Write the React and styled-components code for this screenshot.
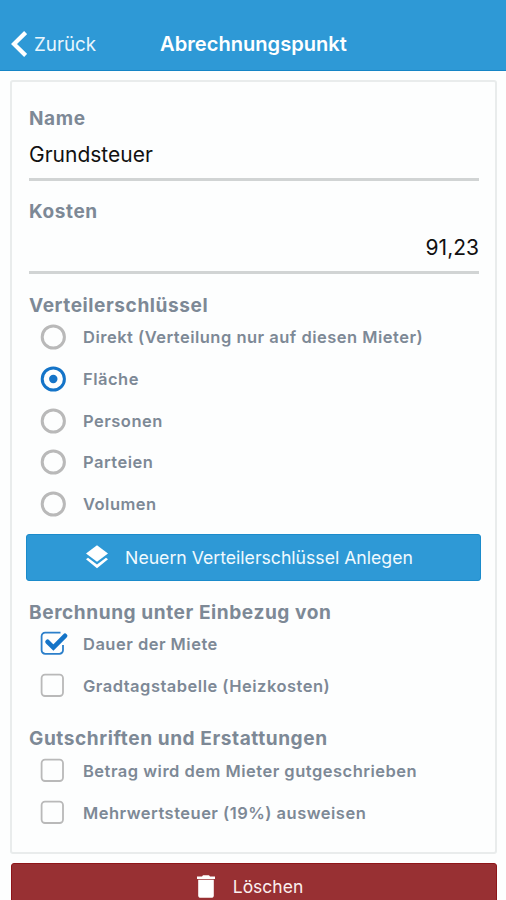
import React, { useState } from "react";
import styled, { createGlobalStyle } from "styled-components";

const DISTRIBUTION_KEYS = [
  "Direkt (Verteilung nur auf diesen Mieter)",
  "Fläche",
  "Personen",
  "Parteien",
  "Volumen",
];

const App = () => {
  const [name, setName] = useState("Grundsteuer");
  const [costs, setCosts] = useState("91,23");
  const [selectedKey, setSelectedKey] = useState("Fläche");
  const [options, setOptions] = useState({
    duration: true,
    degreeDays: false,
    credit: false,
    vat: false,
  });

  const toggleOption = (key) => {
    setOptions({ ...options, [key]: !options[key] });
  };

  return (
    <Screen>
      <GlobalStyle />
      <Header>
        <BackButton type="button">
          <BackIcon />
          <span>Zurück</span>
        </BackButton>
        <Title>Abrechnungspunkt</Title>
      </Header>

      <Card>
        <Field>
          <FieldLabel htmlFor="name">Name</FieldLabel>
          <Input id="name" value={name} onChange={(e) => setName(e.target.value)} />
        </Field>
        <Field>
          <FieldLabel htmlFor="costs">Kosten</FieldLabel>
          <Input
            id="costs"
            $align="right"
            value={costs}
            onChange={(e) => setCosts(e.target.value)}
          />
        </Field>

        <SectionTitle>Verteilerschlüssel</SectionTitle>
        {DISTRIBUTION_KEYS.map((label) => (
          <OptionRow
            key={label}
            type="button"
            role="radio"
            aria-checked={selectedKey === label}
            onClick={() => setSelectedKey(label)}
          >
            <RadioIcon checked={selectedKey === label} />
            {label}
          </OptionRow>
        ))}

        <PrimaryButton type="button">
          <LayersIcon />
          Neuern Verteilerschlüssel Anlegen
        </PrimaryButton>

        <SectionTitle>Berchnung unter Einbezug von</SectionTitle>
        <CheckOption
          label="Dauer der Miete"
          checked={options.duration}
          onToggle={() => toggleOption("duration")}
        />
        <CheckOption
          label="Gradtagstabelle (Heizkosten)"
          checked={options.degreeDays}
          onToggle={() => toggleOption("degreeDays")}
        />

        <SectionTitle $top="19.4px">Gutschriften und Erstattungen</SectionTitle>
        <CheckOption
          label="Betrag wird dem Mieter gutgeschrieben"
          checked={options.credit}
          onToggle={() => toggleOption("credit")}
        />
        <CheckOption
          label="Mehrwertsteuer (19%) ausweisen"
          checked={options.vat}
          onToggle={() => toggleOption("vat")}
        />
      </Card>

      <DeleteButton type="button">
        <TrashIcon />
        Löschen
      </DeleteButton>
    </Screen>
  );
};

const CheckOption = ({ label, checked, onToggle }) => (
  <OptionRow type="button" role="checkbox" aria-checked={checked} onClick={onToggle}>
    <CheckIcon checked={checked} />
    {label}
  </OptionRow>
);

const BackIcon = () => (
  <svg width="17" height="28" viewBox="0 0 17 28" fill="none">
    <path d="M15.6 2.6L4 14L15.6 25.4" stroke="#fff" strokeWidth="4.2" />
  </svg>
);

const RadioIcon = ({ checked }) => (
  <svg width="28" height="26" viewBox="0 0 28 26" fill="none">
    <circle cx="13.3" cy="13" r="11.1" stroke={checked ? "#1474c8" : "#b9b9b9"} strokeWidth="3" />
    {checked && <circle cx="13.3" cy="13" r="4.2" fill="#1474c8" />}
  </svg>
);

const CheckIcon = ({ checked }) => (
  <svg width="28" height="26" viewBox="0 0 28 26" fill="none">
    {checked ? (
      <>
        <path
          d="M20.5 1.6H5.2A3.6 3.6 0 0 0 1.6 5.2V19.2A3.6 3.6 0 0 0 5.2 22.8H19.4A3.6 3.6 0 0 0 23 19.2V14"
          stroke="#2b7fca"
          strokeWidth="1.8"
        />
        <path d="M7.6 10.8L13.4 16.6L25 4.8" stroke="#1474c8" strokeWidth="4.6" strokeLinecap="round" />
      </>
    ) : (
      <rect x="1.6" y="1.6" width="21.4" height="21.4" rx="3.4" stroke="#b9b9b9" strokeWidth="1.8" />
    )}
  </svg>
);

const LayersIcon = () => (
  <svg width="24" height="24" viewBox="0 0 24 24" fill="#fff">
    <path d="M12 0.2L23 8.5L12 16.8L1 8.5Z" />
    <path d="M1 14.2L3 12.7L12 19.5L21 12.7L23 14.2L12 23.2Z" />
  </svg>
);

const TrashIcon = () => (
  <svg width="20" height="24" viewBox="0 0 20 24" fill="#fff">
    <path d="M1 1.4H6L7 0.2H13L14 1.4H19V4H1Z" />
    <path d="M2.2 4.8H17.8V20.2A2.6 2.6 0 0 1 15.2 22.8H4.8A2.6 2.6 0 0 1 2.2 20.2Z" />
  </svg>
);

const GlobalStyle = createGlobalStyle`
  * {
    box-sizing: border-box;
  }

  body {
    margin: 0;
    background: #fdfefe;
    font-family: Inter, "Liberation Sans", sans-serif;
  }

  button,
  input {
    font-family: inherit;
  }
`;

const Screen = styled.div`
  display: flex;
  flex-direction: column;
  height: 900px;
  overflow: hidden;
`;

const Header = styled.header`
  display: grid;
  grid-template-columns: 1fr auto 1fr;
  align-items: center;
  flex: none;
  height: 71px;
  padding: 18px 9px 0 10px;
  background: #2e99d6;
  border-bottom: 1px solid #1585c6;
  color: #fff;
`;

const BackButton = styled.button`
  display: flex;
  align-items: center;
  gap: 7px;
  padding: 0;
  border: none;
  background: none;
  color: #e9f6fd;
  font-size: 18.8px;
  cursor: pointer;
`;

const Title = styled.h1`
  margin: 0;
  font-size: 20.1px;
  font-weight: 600;
`;

const Card = styled.main`
  display: flex;
  flex-direction: column;
  flex: none;
  height: 774px;
  margin: 9px 9px 0 10px;
  padding: 24px 16px 0 17px;
  border: 2px solid #e9ecec;
  border-radius: 3px;
`;

const Field = styled.div`
  display: flex;
  flex-direction: column;
  height: 93.3px;
`;

const FieldLabel = styled.label`
  height: 24px;
  color: #7d8996;
  font-size: 19px;
  font-weight: 700;
  letter-spacing: 0.6px;
  line-height: 25px;
`;

const Input = styled.input`
  height: 51px;
  padding: 0;
  border: none;
  border-bottom: 3px solid #d1d4d4;
  outline: none;
  background: none;
  color: #111;
  font-size: 21px;
  text-align: ${({ $align }) => $align || "left"};
`;

const SectionTitle = styled.h2`
  height: 24px;
  margin: ${({ $top }) => $top || "0"} 0 0;
  color: #7d8996;
  font-size: 19.1px;
  font-weight: 700;
  letter-spacing: 0.56px;
  line-height: 25.5px;
`;

const OptionRow = styled.button`
  display: flex;
  align-items: center;
  gap: 15px;
  height: 41.6px;
  padding: 0 0 0 11px;
  border: none;
  background: none;
  color: #7d8996;
  font-size: 16.5px;
  font-weight: 600;
  letter-spacing: 0.49px;
  text-align: left;
  cursor: pointer;
`;

const PrimaryButton = styled.button`
  display: flex;
  align-items: center;
  justify-content: center;
  gap: 16px;
  flex: none;
  height: 47px;
  margin: 9px -2px 19px -3px;
  padding: 0 9px 0 0;
  border: 1px solid #1b8bcb;
  border-radius: 3px;
  background: #2e99d6;
  color: #f0f9fe;
  font-size: 17.65px;
  cursor: pointer;
`;

const DeleteButton = styled.button`
  display: flex;
  align-items: center;
  justify-content: center;
  gap: 17px;
  flex: none;
  height: 47px;
  margin: 9px 9px 0 11px;
  padding: 0 9px 0 0;
  border: 1px solid #8e1519;
  border-radius: 3px;
  background: #983033;
  color: #fbeeee;
  font-size: 17.5px;
  cursor: pointer;
`;

export default App;
